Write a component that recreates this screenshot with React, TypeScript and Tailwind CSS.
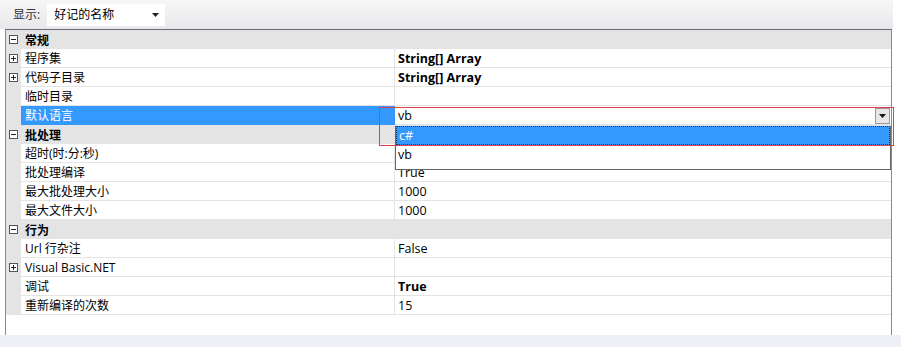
import React from 'react';

type Row =
  | { kind: 'cat'; label: string }
  | { kind: 'prop'; label: string; value?: string; bold?: boolean; plus?: boolean; selected?: boolean };

const rows: Row[] = [
  { kind: 'cat', label: '常规' },
  { kind: 'prop', label: '程序集', value: 'String[] Array', bold: true, plus: true },
  { kind: 'prop', label: '代码子目录', value: 'String[] Array', bold: true, plus: true },
  { kind: 'prop', label: '临时目录', value: '' },
  { kind: 'prop', label: '默认语言', value: 'vb', selected: true },
  { kind: 'cat', label: '批处理' },
  { kind: 'prop', label: '超时(时:分:秒)', value: '' },
  { kind: 'prop', label: '批处理编译', value: 'True' },
  { kind: 'prop', label: '最大批处理大小', value: '1000' },
  { kind: 'prop', label: '最大文件大小', value: '1000' },
  { kind: 'cat', label: '行为' },
  { kind: 'prop', label: 'Url 行杂注', value: 'False' },
  { kind: 'prop', label: 'Visual Basic.NET', value: '', plus: true },
  { kind: 'prop', label: '调试', value: 'True', bold: true },
  { kind: 'prop', label: '重新编译的次数', value: '15' },
];

const font = { fontFamily: '"Open Sans", "Noto Sans CJK SC", sans-serif' };

const Toggle = ({ open }: { open: boolean }) => (
  <span className="flex h-[9px] w-[9px] items-center justify-center border border-[#555] bg-white">
    <svg width="7" height="7" viewBox="0 0 7 7">
      <path d="M1 3.5h5" stroke="#222" strokeWidth="1" />
      {!open && <path d="M3.5 1v5" stroke="#222" strokeWidth="1" />}
    </svg>
  </span>
);

export default function App() {
  return (
    <div className="relative h-[347px] w-[901px] overflow-hidden bg-white text-[12px] text-black" style={font}>
      {/* toolbar */}
      <div className="flex h-[29px] w-[893px] items-center bg-gradient-to-b from-[#f7f7f7] to-[#e8e8ec] pl-[13px] pt-[1px]">
        <span className="text-[#333]">显示:</span>
        <div className="ml-[7px] flex h-[22px] w-[118px] items-center bg-white pl-[7px] pr-[6px]">
          <span className="flex-1">好记的名称</span>
          <svg width="7" height="4" viewBox="0 0 7 4"><path d="M0 0h7L3.5 4z" fill="#222" /></svg>
        </div>
      </div>
      <div className="ml-[5px] h-[1px] w-[887px] bg-[#6a6a72]" />

      {/* grid */}
      <div className="ml-[5px] flex h-[305px] w-[887px] flex-col border-x border-[#8a8a8a]">
        {rows.map((r, i) =>
          r.kind === 'cat' ? (
            <div key={i} className="flex h-[19px] shrink-0 items-center bg-[#e4e4e4]">
              <div className="flex w-[15px] justify-center">
                <Toggle open />
              </div>
              <span className="pl-[4px] pt-[2px] font-bold">{r.label}</span>
            </div>
          ) : (
            <div key={i} className="flex h-[19px] shrink-0">
              <div className="flex w-[15px] items-center justify-center bg-[#e4e4e4]">
                {r.plus && <Toggle open={false} />}
              </div>
              <div
                className={`flex w-[374px] items-center border-b border-r pl-[4px] pt-[2px] ${
                  r.selected ? 'border-[#3399ff] bg-[#3399ff] text-white' : 'border-[#e4e4e4]'
                }`}
              >
                {r.label}
              </div>
              <div
                className={`flex flex-1 items-center border-b border-[#e4e4e4] pl-[3px] pt-[2px] text-[12.5px] ${
                  r.bold ? 'font-bold' : ''
                }`}
              >
                {r.value}
              </div>
            </div>
          )
        )}
      </div>
      <div className="h-[12px] w-full bg-[#eef0f8]" />

      {/* open dropdown overlay */}
      <div className="absolute left-[875px] top-[108px] flex h-[16px] w-[15px] items-center justify-center border border-[#9a9a9a] bg-[#e6e6e6]">
        <svg width="7" height="4" viewBox="0 0 7 4"><path d="M0 0h7L3.5 4z" fill="#111" /></svg>
      </div>
      <div className="absolute left-[395px] top-[126px] w-[496px] border-x border-b border-[#666] bg-white text-[12.5px]">
        <div className="flex h-[19px] items-center border border-dotted border-[#333] bg-[#3399ff] pl-[2px] pt-[1px] text-white">c#</div>
        <div className="flex h-[19px] items-center pl-[2px] pt-[2px]">vb</div>
        <div className="h-[5px]" />
      </div>
      <div className="pointer-events-none absolute left-[379px] top-[107px] h-[39px] w-[515px] border border-[#e0404a]" />
    </div>
  );
}
